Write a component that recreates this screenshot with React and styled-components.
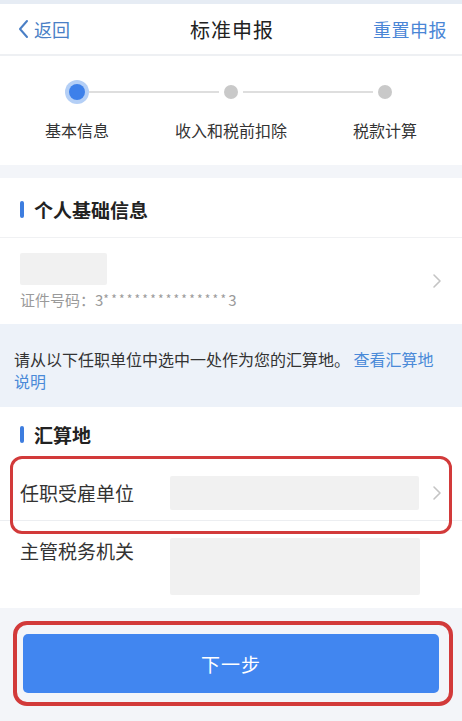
import React from "react";
import styled, { createGlobalStyle } from "styled-components";

const Global = createGlobalStyle`
  html, body { margin: 0; padding: 0; }
  body {
    background: #f3f5f9;
    font-family: "Noto Sans CJK SC", "Noto Sans", "Liberation Sans", sans-serif;
    color: #333;
  }
  * { box-sizing: border-box; }
`;

const Page = styled.div`
  width: 462px;
  min-height: 721px;
  display: flex;
  flex-direction: column;
  background: #f3f5f9;
`;

const TopStrip = styled.div`
  height: 4px;
  background: #e6ecf4;
`;

const NavBar = styled.div`
  height: 52px;
  background: #fff;
  border-bottom: 2px solid #eef0f3;
  display: grid;
  grid-template-columns: 1fr auto 1fr;
  align-items: center;
  padding: 0 15px 0 17px;
`;

const Back = styled.div`
  display: flex;
  align-items: center;
  gap: 5px;
  color: #4a7fc6;
  font-size: 18px;
`;

const Title = styled.div`
  font-size: 20px;
  color: #222;
  letter-spacing: 1px;
`;

const Reset = styled.div`
  justify-self: end;
  color: #4a86d6;
  font-size: 18px;
  letter-spacing: 0.5px;
`;

const StepSection = styled.div`
  background: #fff;
  height: 109px;
  padding-top: 24px;
`;

const Track = styled.div`
  display: flex;
  align-items: center;
  padding: 0 65px;
  height: 24px;
`;

const DotWrap = styled.div`
  width: 24px;
  height: 24px;
  display: flex;
  align-items: center;
  justify-content: center;
`;

const Dot = styled.div`
  width: ${(p) => (p.$active ? 16 : 14)}px;
  height: ${(p) => (p.$active ? 16 : 14)}px;
  border-radius: 50%;
  background: ${(p) => (p.$active ? "#3d80ea" : "#c9c9c9")};
  box-shadow: ${(p) => (p.$active ? "0 0 0 4px #b4cff6" : "none")};
`;

const Line = styled.div`
  flex: 1;
  height: 2px;
  background: #dedede;
`;

const Labels = styled.div`
  display: grid;
  grid-template-columns: repeat(3, 1fr);
  margin-top: 14px;
`;

const StepLabel = styled.div`
  text-align: center;
  font-size: 16px;
  line-height: 24px;
  color: #333;
`;

const Card = styled.div`
  background: #fff;
  margin-top: ${(p) => p.$mt || 0}px;
`;

const SectionHeader = styled.div`
  height: ${(p) => p.$h}px;
  display: flex;
  align-items: center;
  gap: 10px;
  padding: ${(p) => p.$pt || 0}px 20px 0;
  border-bottom: ${(p) => (p.$border ? "1px solid #f0f1f3" : "none")};
  font-size: 19px;
  font-weight: 700;
  color: #222;
`;

const Bar = styled.span`
  width: 4px;
  height: 17px;
  border-radius: 2px;
  background: #3d7ddf;
`;

const PersonRow = styled.div`
  height: 86px;
  display: flex;
  align-items: center;
  padding: 0 20px;
`;

const PersonInfo = styled.div`
  flex: 1;
  display: flex;
  flex-direction: column;
  gap: 3px;
  padding-top: 2px;
`;

const Masked = styled.div`
  width: ${(p) => p.$w}px;
  height: ${(p) => p.$h}px;
  background: #f1f1f1;
  border-radius: 2px;
`;

const IdText = styled.div`
  font-size: 15px;
  line-height: 22px;
  color: #9a9a9a;
`;

const Stars = styled.span`
  font-size: 12px;
  letter-spacing: 2.2px;
  vertical-align: 2px;
`;

const Notice = styled.div`
  background: #edf2f9;
  padding: 24px 14px 15px;
  font-size: 16px;
  line-height: 22px;
  color: #333;
`;

const Link = styled.span`
  color: #4a8ad8;
`;

const FieldRow = styled.div`
  position: relative;
  display: flex;
  align-items: ${(p) => (p.$top ? "flex-start" : "center")};
  height: ${(p) => p.$h}px;
  padding: ${(p) => p.$pad};
  border-bottom: ${(p) => (p.$border ? "1px solid #eceef1" : "none")};
`;

const FieldLabel = styled.div`
  width: 150px;
  font-size: 19px;
  line-height: 26px;
  color: #333;
`;

const Highlight = styled.div`
  position: absolute;
  top: ${(p) => p.$t}px;
  bottom: ${(p) => p.$b}px;
  left: ${(p) => p.$l}px;
  right: ${(p) => p.$r}px;
  border: ${(p) => p.$bw}px solid #d23a3a;
  border-radius: ${(p) => p.$rad}px;
  pointer-events: none;
`;

const Chevron = styled.svg`
  margin-left: 13px;
  flex-shrink: 0;
`;

const Footer = styled.div`
  padding: 26px 23px 28px;
`;

const ButtonBox = styled.div`
  position: relative;
`;

const NextButton = styled.button`
  width: 100%;
  height: 59px;
  border: none;
  border-radius: 5px;
  background: #4186f0;
  color: #fff;
  font-family: inherit;
  font-size: 19px;
  letter-spacing: 1px;
`;

const Arrow = () => (
  <Chevron width="10" height="16" viewBox="0 0 10 16">
    <path d="M2 2 L8 8 L2 14" fill="none" stroke="#c4c4c4" strokeWidth="1.6" strokeLinecap="round" strokeLinejoin="round" />
  </Chevron>
);

export default function App() {
  return (
    <>
      <Global />
      <Page>
        <TopStrip />
        <NavBar>
          <Back>
            <svg width="12" height="20" viewBox="0 0 12 20">
              <path d="M10 2 L3 10 L10 18" fill="none" stroke="#4a7fc6" strokeWidth="2" strokeLinecap="round" strokeLinejoin="round" />
            </svg>
            返回
          </Back>
          <Title>标准申报</Title>
          <Reset>重置申报</Reset>
        </NavBar>

        <StepSection>
          <Track>
            <DotWrap><Dot $active /></DotWrap>
            <Line />
            <DotWrap><Dot /></DotWrap>
            <Line />
            <DotWrap><Dot /></DotWrap>
          </Track>
          <Labels>
            <StepLabel>基本信息</StepLabel>
            <StepLabel>收入和税前扣除</StepLabel>
            <StepLabel>税款计算</StepLabel>
          </Labels>
        </StepSection>

        <Card $mt={13}>
          <SectionHeader $h={60} $pt={4} $border>
            <Bar />
            个人基础信息
          </SectionHeader>
          <PersonRow>
            <PersonInfo>
              <Masked $w={87} $h={32} />
              <IdText>
                证件号码：3<Stars>****************</Stars>3
              </IdText>
            </PersonInfo>
            <Arrow />
          </PersonRow>
        </Card>

        <Notice>
          请从以下任职单位中选中一处作为您的汇算地。&nbsp;<Link>查看汇算地说明</Link>
        </Notice>

        <Card>
          <SectionHeader $h={52} $pt={2}>
            <Bar />
            汇算地
          </SectionHeader>
          <FieldRow $h={62} $pad="6px 20px 0" $border>
            <FieldLabel>任职受雇单位</FieldLabel>
            <Masked $w={250} $h={34} />
            <Arrow />
            <Highlight $t={-3} $b={-14} $l={10} $r={10} $bw={3} $rad={12} />
          </FieldRow>
          <FieldRow $h={87} $pad="17px 20px 0" $top>
            <FieldLabel>主管税务机关</FieldLabel>
            <Masked $w={250} $h={57} />
          </FieldRow>
        </Card>

        <Footer>
          <ButtonBox>
            <NextButton>下一步</NextButton>
            <Highlight $t={-13} $b={-13} $l={-10} $r={-14} $bw={4} $rad={14} />
          </ButtonBox>
        </Footer>
      </Page>
    </>
  );
}
